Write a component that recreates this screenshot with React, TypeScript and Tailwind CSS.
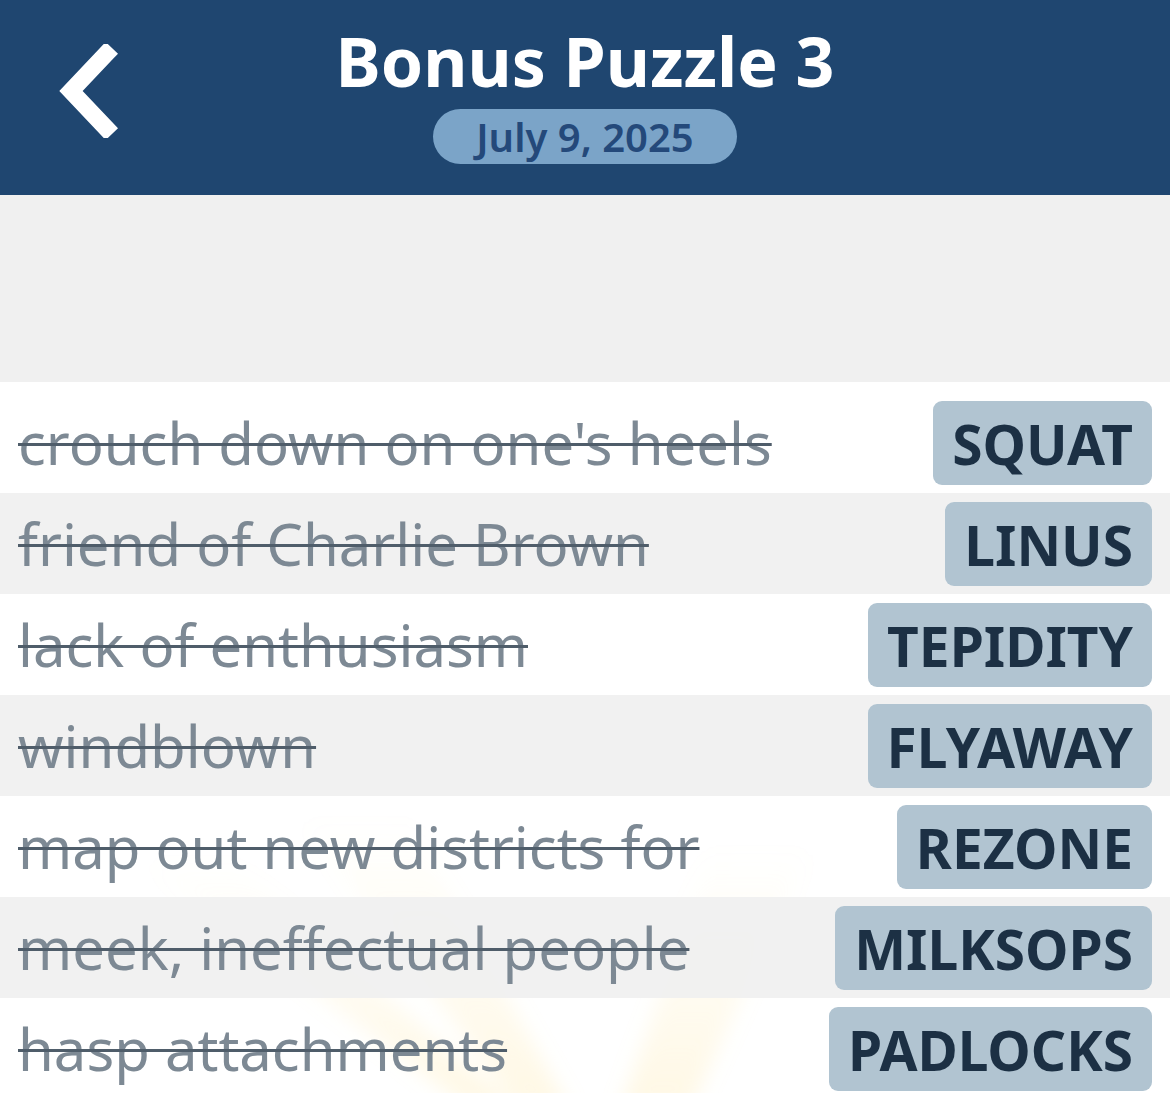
import React from "react";

const rows: { clue: string; answer: string }[] = [
  { clue: "crouch down on one's heels", answer: "SQUAT" },
  { clue: "friend of Charlie Brown", answer: "LINUS" },
  { clue: "lack of enthusiasm", answer: "TEPIDITY" },
  { clue: "windblown", answer: "FLYAWAY" },
  { clue: "map out new districts for", answer: "REZONE" },
  { clue: "meek, ineffectual people", answer: "MILKSOPS" },
  { clue: "hasp attachments", answer: "PADLOCKS" },
];

export default function App() {
  return (
    <div
      className="w-[1170px] h-[1093px] overflow-hidden bg-[#f0f0f0] flex flex-col"
      style={{ fontFamily: '"Noto Sans", "Open Sans", sans-serif' }}
    >
      <header className="relative h-[195px] bg-[#1f4670] flex flex-col items-center shrink-0">
        <svg
          className="absolute left-[52px] top-[44px]"
          width="66"
          height="94"
          viewBox="0 0 66 94"
        >
          <path d="M54 10 L19 47 L54 84" fill="none" stroke="#ffffff" strokeWidth="17" strokeLinecap="square" strokeLinejoin="miter" />
        </svg>
        <h1 className="mt-[21px] text-white font-bold text-[68px] leading-[80px]">Bonus Puzzle 3</h1>
        <div className="mt-[8px] h-[55px] w-[304px] rounded-full bg-[#7ba4c8] flex items-center justify-center">
          <span className="text-[#24497a] font-semibold text-[40px] leading-none">July 9, 2025</span>
        </div>
      </header>
      <div className="h-[187px] shrink-0" />
      <div className="relative flex-1 bg-white flex flex-col">
        <svg className="absolute left-0 top-0 pointer-events-none" width="1170" height="711" viewBox="0 382 1170 711">
          <defs>
            <linearGradient id="ray" x1="0" y1="1" x2="0" y2="0">
              <stop offset="0" stopColor="#fde7a0" stopOpacity="0.28" />
              <stop offset="1" stopColor="#fde7a0" stopOpacity="0" />
            </linearGradient>
            <filter id="soft" x="-20%" y="-20%" width="140%" height="140%">
              <feGaussianBlur stdDeviation="10" />
            </filter>
          </defs>
          <g filter="url(#soft)">
            <polygon points="470,1110 140,860 230,860 520,1110" fill="url(#ray)" />
            <polygon points="520,1110 300,820 410,820 570,1110" fill="url(#ray)" />
            <polygon points="620,1110 710,850 810,850 690,1110" fill="url(#ray)" />
          </g>
        </svg>
        {rows.map((r, i) => (
          <div
            key={r.answer}
            className={
              (i % 2 === 0 ? "bg-transparent " : "bg-[#f0f0f0]/90 ") +
              (i === 0 ? "h-[111px] pt-[19px] pb-[8px] " : "h-[101px] pt-[9px] pb-[8px] ") +
              "relative flex items-stretch justify-between pl-[18px] pr-[18px]"
            }
          >
            <div className="flex items-center text-[#7d8994] text-[58px] leading-none line-through decoration-[#4f5d6a] decoration-[2.5px] whitespace-nowrap">
              {r.clue}
            </div>
            <div className="rounded-[9px] bg-[#b1c4d1] flex items-center px-[19px]">
              <span className="text-[#1c3044] font-bold text-[55px] leading-none">{r.answer}</span>
            </div>
          </div>
        ))}
      </div>
    </div>
  );
}
